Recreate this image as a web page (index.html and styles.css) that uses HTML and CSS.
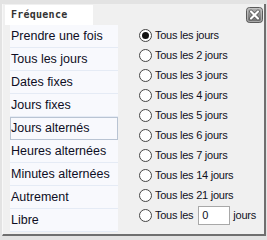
FILE: index.html
```html
<!DOCTYPE html>
<html>
<head>
<meta charset="utf-8">
<link rel="stylesheet" href="styles.css">
</head>
<body>
<div class="dialog">
  <div class="header">
    <div class="tab">Fréquence</div>
    <div class="close">
      <svg width="17" height="16" viewBox="0 0 17 16">
        <defs>
          <linearGradient id="g" x1="0" y1="0" x2="0" y2="1">
            <stop offset="0" stop-color="#b4b4b4"/>
            <stop offset="0.5" stop-color="#8a8a8a"/>
            <stop offset="1" stop-color="#6c6c6c"/>
          </linearGradient>
        </defs>
        <rect x="0.5" y="0.5" width="16" height="15" rx="3" fill="url(#g)" stroke="#5a5a5a"/>
        <rect x="1.5" y="1.5" width="14" height="13" rx="2" fill="none" stroke="#cfcfcf" stroke-opacity="0.6"/>
        <path d="M5 4.5 L12 11.5 M12 4.5 L5 11.5" stroke="#555" stroke-width="3.6" stroke-linecap="round"/>
        <path d="M5 4.5 L12 11.5 M12 4.5 L5 11.5" stroke="#fff" stroke-width="2.2" stroke-linecap="round"/>
      </svg>
    </div>
  </div>
  <div class="body">
    <ul class="list">
      <li class="item">Prendre une fois</li>
      <li class="item">Tous les jours</li>
      <li class="item">Dates fixes</li>
      <li class="item">Jours fixes</li>
      <li class="item selected">Jours alternés</li>
      <li class="item">Heures alternées</li>
      <li class="item">Minutes alternées</li>
      <li class="item">Autrement</li>
      <li class="item">Libre</li>
    </ul>
    <div class="options">
      <div class="opt"><span class="radio checked"></span><span class="lbl">Tous les jours</span></div>
      <div class="opt"><span class="radio"></span><span class="lbl">Tous les 2 jours</span></div>
      <div class="opt"><span class="radio"></span><span class="lbl">Tous les 3 jours</span></div>
      <div class="opt"><span class="radio"></span><span class="lbl">Tous les 4 jours</span></div>
      <div class="opt"><span class="radio"></span><span class="lbl">Tous les 5 jours</span></div>
      <div class="opt"><span class="radio"></span><span class="lbl">Tous les 6 jours</span></div>
      <div class="opt"><span class="radio"></span><span class="lbl">Tous les 7 jours</span></div>
      <div class="opt"><span class="radio"></span><span class="lbl">Tous les 14 jours</span></div>
      <div class="opt"><span class="radio"></span><span class="lbl">Tous les 21 jours</span></div>
      <div class="opt"><span class="radio"></span><span class="lbl">Tous les</span><span class="num">0</span><span class="lbl">jours</span></div>
    </div>
  </div>
</div>
</body>
</html>
```
FILE: styles.css
```css
html, body {
  margin: 0;
  padding: 0;
}
body {
  width: 267px;
  height: 240px;
  background: #e3e3e3;
  overflow: hidden;
}
.dialog {
  margin: 4px 0 0 2px;
  width: 261px;
  height: 230px;
  background: #f0f0f0;
  border-left: 1px solid #f8f8f8;
  border-right: 2px solid #6f6f6f;
  border-bottom: 2px solid #6f6f6f;
  display: flex;
  flex-direction: column;
}
.header {
  display: flex;
  justify-content: space-between;
  align-items: flex-start;
  height: 21px;
}
.tab {
  margin: 1px 0 0 2px;
  width: 82px;
  height: 20px;
  padding-left: 6px;
  background: #ffffff;
  font-family: "DejaVu Sans Mono", monospace;
  font-weight: bold;
  font-size: 10px;
  letter-spacing: 0.25px;
  line-height: 19px;
  color: #333333;
}
.close {
  margin: 3px 1px 0 0;
  width: 17px;
  height: 16px;
}
.close svg {
  display: block;
}
.body {
  display: flex;
}
.list {
  list-style: none;
  margin: 0 0 0 7px;
  padding: 0;
  width: 108px;
}
.item {
  height: 22px;
  border-bottom: 1px solid #e5ebf5;
  background: #f8f9fd;
  padding-left: 1px;
  font-family: "Liberation Sans", Arial, sans-serif;
  font-size: 12.5px;
  line-height: 22px;
  color: #0e0e24;
  box-sizing: content-box;
}
.item.selected {
  height: 21px;
  border: 1px solid #b9c4d3;
  padding-left: 0;
  line-height: 21px;
}
.options {
  margin-left: 21px;
  display: flex;
  flex-direction: column;
}
.opt {
  height: 20px;
  display: flex;
  align-items: center;
  font-family: "Liberation Sans", Arial, sans-serif;
  font-size: 11px;
  letter-spacing: -0.25px;
  color: #10101c;
}
.radio {
  width: 11px;
  height: 11px;
  border: 1px solid #444444;
  border-radius: 50%;
  background: #ffffff;
  margin-right: 3px;
  position: relative;
  flex: none;
}
.radio.checked::after {
  content: "";
  position: absolute;
  left: 2px;
  top: 2px;
  width: 7px;
  height: 7px;
  border-radius: 50%;
  background: #111111;
}
.num {
  width: 27px;
  height: 17px;
  margin: 0 3px 0 5px;
  padding-left: 3px;
  background: #ffffff;
  border: 1px solid #a8a8a8;
  line-height: 17px;
  font-size: 11px;
  letter-spacing: 0;
}
```
